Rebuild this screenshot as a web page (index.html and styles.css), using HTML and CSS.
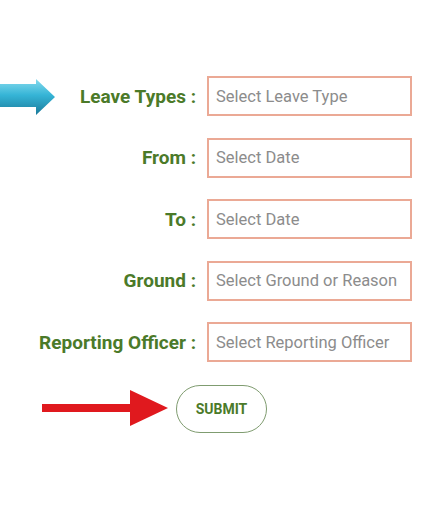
FILE: index.html
```html
<!DOCTYPE html>
<html>
<head>
<meta charset="utf-8">
<link rel="stylesheet" href="styles.css">
</head>
<body>
<div class="page">
  <form class="form">
    <div class="grid">
      <label class="label">Leave Types :</label>
      <div class="field">Select Leave Type</div>
      <label class="label">From :</label>
      <div class="field">Select Date</div>
      <label class="label">To :</label>
      <div class="field">Select Date</div>
      <label class="label">Ground :</label>
      <div class="field">Select Ground or Reason</div>
      <label class="label">Reporting Officer :</label>
      <div class="field">Select Reporting Officer</div>
    </div>
    <div class="actions">
      <button type="button" class="submit">SUBMIT</button>
    </div>
  </form>
  <svg class="arrow-blue" width="58" height="36" viewBox="0 0 58 36">
    <defs>
      <linearGradient id="bg" x1="0" y1="0" x2="0" y2="1">
        <stop offset="0" stop-color="#86dbee"/>
        <stop offset="0.45" stop-color="#35b4d6"/>
        <stop offset="1" stop-color="#1a7a9a"/>
      </linearGradient>
    </defs>
    <path d="M0 5 H36 V0 L55 18 L36 36 V28 H0 Z" fill="url(#bg)"/>
  </svg>
  <svg class="arrow-red" width="128" height="38" viewBox="0 0 128 38">
    <path d="M0 15 H88 V1 L126 19 L88 37 V23 H0 Z" fill="#e0191e"/>
  </svg>
</div>
</body>
</html>
```
FILE: styles.css
```css
html, body {
  margin: 0;
  padding: 0;
  background: #ffffff;
}
.page {
  position: relative;
  width: 421px;
  height: 515px;
  font-family: Roboto, "Liberation Sans", sans-serif;
}
.form {
  padding-top: 76px;
}
.grid {
  display: grid;
  grid-template-columns: 196px 205px;
  column-gap: 11px;
  row-gap: 21.5px;
  align-items: center;
}
.label {
  text-align: right;
  font-weight: 700;
  font-size: 19px;
  color: #4b7a29;
  white-space: nowrap;
}
.field {
  box-sizing: border-box;
  height: 40px;
  border: 2px solid #eba995;
  display: flex;
  align-items: center;
  padding-left: 7px;
  font-size: 16.5px;
  color: #8c8c8c;
  white-space: nowrap;
  overflow: hidden;
}
.actions {
  padding-top: 23px;
  padding-left: 176px;
}
.submit {
  box-sizing: border-box;
  width: 91px;
  height: 48px;
  border: 1.5px solid #7f9c70;
  border-radius: 24px;
  background: #ffffff;
  font-family: Roboto, "Liberation Sans", sans-serif;
  font-weight: 700;
  font-size: 14px;
  color: #4b7a29;
  padding: 0;
}
.arrow-blue {
  position: absolute;
  left: 0;
  top: 79px;
}
.arrow-red {
  position: absolute;
  left: 42px;
  top: 389px;
}
```
